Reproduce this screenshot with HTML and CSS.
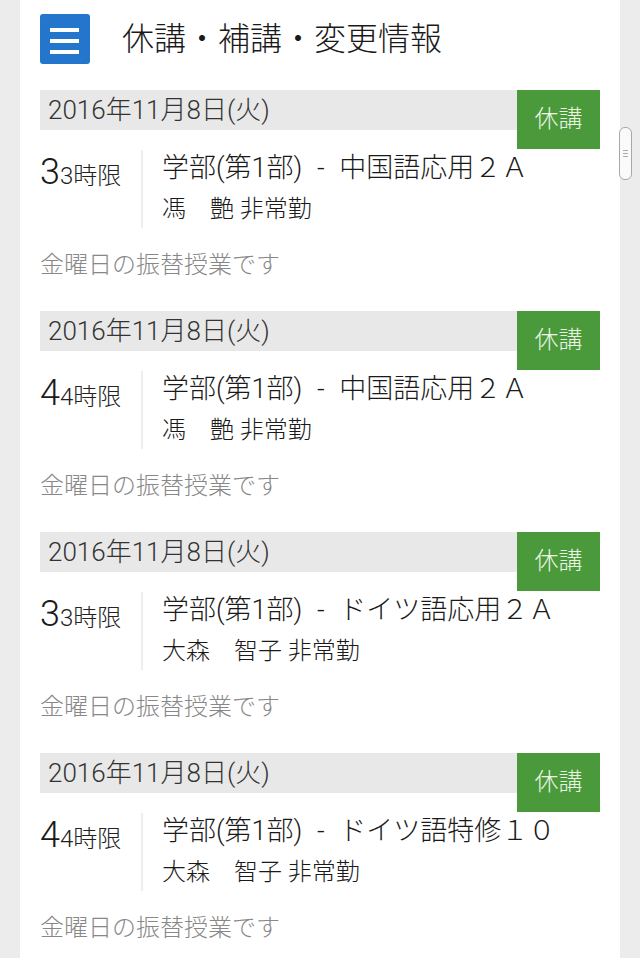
FILE: index.html
```html
<!DOCTYPE html>
<html lang="ja">
<head>
<meta charset="utf-8">
<title>休講・補講・変更情報</title>
<link rel="stylesheet" href="styles.css">
</head>
<body>
<div class="page">
  <header class="header">
    <div class="menu-btn">
      <svg width="30" height="26" viewBox="0 0 30 26"><rect x="0" y="2" width="29" height="4" fill="#fff"/><rect x="0" y="13" width="29" height="4" fill="#fff"/><rect x="0" y="24" width="29" height="4" fill="#fff"/></svg>
    </div>
    <h1 class="title">休講・補講・変更情報</h1>
  </header>

  <section class="card">
    <div class="date-bar">2016年11月8日(火)</div>
    <div class="badge">休講</div>
    <div class="row">
      <div class="period"><span class="big">3</span><span class="small">3時限</span></div>
      <div class="info">
        <div class="subject">学部(第1部) - 中国語応用２Ａ</div>
        <div class="teacher">馮　艶 非常勤</div>
      </div>
    </div>
    <div class="note">金曜日の振替授業です</div>
  </section>

  <section class="card">
    <div class="date-bar">2016年11月8日(火)</div>
    <div class="badge">休講</div>
    <div class="row">
      <div class="period"><span class="big">4</span><span class="small">4時限</span></div>
      <div class="info">
        <div class="subject">学部(第1部) - 中国語応用２Ａ</div>
        <div class="teacher">馮　艶 非常勤</div>
      </div>
    </div>
    <div class="note">金曜日の振替授業です</div>
  </section>

  <section class="card">
    <div class="date-bar">2016年11月8日(火)</div>
    <div class="badge">休講</div>
    <div class="row">
      <div class="period"><span class="big">3</span><span class="small">3時限</span></div>
      <div class="info">
        <div class="subject">学部(第1部) - ドイツ語応用２Ａ</div>
        <div class="teacher">大森　智子 非常勤</div>
      </div>
    </div>
    <div class="note">金曜日の振替授業です</div>
  </section>

  <section class="card">
    <div class="date-bar">2016年11月8日(火)</div>
    <div class="badge">休講</div>
    <div class="row">
      <div class="period"><span class="big">4</span><span class="small">4時限</span></div>
      <div class="info">
        <div class="subject">学部(第1部) - ドイツ語特修１０</div>
        <div class="teacher">大森　智子 非常勤</div>
      </div>
    </div>
    <div class="note">金曜日の振替授業です</div>
  </section>
</div>
<div class="scrollbar"><span></span><span></span><span></span></div>
</body>
</html>
```
FILE: styles.css
```css
* { box-sizing: border-box; }
html, body { margin: 0; padding: 0; }
body {
  background: #ececec;
  font-family: Roboto, "Noto Sans CJK JP", "Noto Sans", sans-serif;
  font-weight: 300;
  color: #222;
  height: 958px;
  overflow: hidden;
  position: relative;
}
.page {
  width: 600px;
  margin-left: 20px;
  min-height: 958px;
  background: #fff;
  padding: 14px 20px 0;
}
.header {
  display: flex;
  align-items: center;
  gap: 32px;
  height: 50px;
  margin-bottom: 26px;
}
.menu-btn {
  width: 50px;
  height: 50px;
  border-radius: 3px;
  background: #2376cc;
  display: flex;
  align-items: center;
  justify-content: center;
}
.menu-btn svg { display: block; height: 30px; }
.title {
  margin: 0;
  font-size: 32px;
  font-weight: 300;
  line-height: 50px;
  color: #1a1a1a;
}
.card {
  position: relative;
  margin-bottom: 27px;
}
.date-bar {
  height: 40px;
  line-height: 40px;
  background: #e8e8e8;
  padding-left: 8px;
  font-size: 26px;
  color: #333;
}
.badge {
  position: absolute;
  top: 0;
  right: 0;
  width: 83px;
  height: 59px;
  background: #4a9a3b;
  color: #eaf5e4;
  font-size: 24px;
  line-height: 59px;
  text-align: center;
}
.row {
  display: flex;
  margin-top: 20px;
  height: 78px;
}
.period {
  width: 103px;
  border-right: 2px solid #eeeeee;
  line-height: 44px;
  white-space: nowrap;
}
.period .big { font-size: 36px; color: #1a1a1a; }
.period .small { font-size: 24px; color: #222; }
.info { padding-left: 19px; }
.subject {
  font-size: 27px;
  line-height: 36px;
  white-space: nowrap;
  color: #1a1a1a;
  word-spacing: 8px;
}
.teacher {
  font-size: 24px;
  line-height: 38px;
  margin-top: 4px;
  white-space: nowrap;
  color: #1a1a1a;
}
.note {
  margin-top: 18px;
  font-size: 24px;
  line-height: 38px;
  color: #888;
}
.scrollbar {
  position: absolute;
  left: 619px;
  top: 127px;
  width: 13px;
  height: 53px;
  border: 1.5px solid #a8a8a8;
  border-radius: 6px;
  background: #fafafa;
  display: flex;
  flex-direction: column;
  align-items: center;
  justify-content: center;
  gap: 2px;
}
.scrollbar span {
  display: block;
  width: 5px;
  height: 1px;
  background: #aaa;
}
```
